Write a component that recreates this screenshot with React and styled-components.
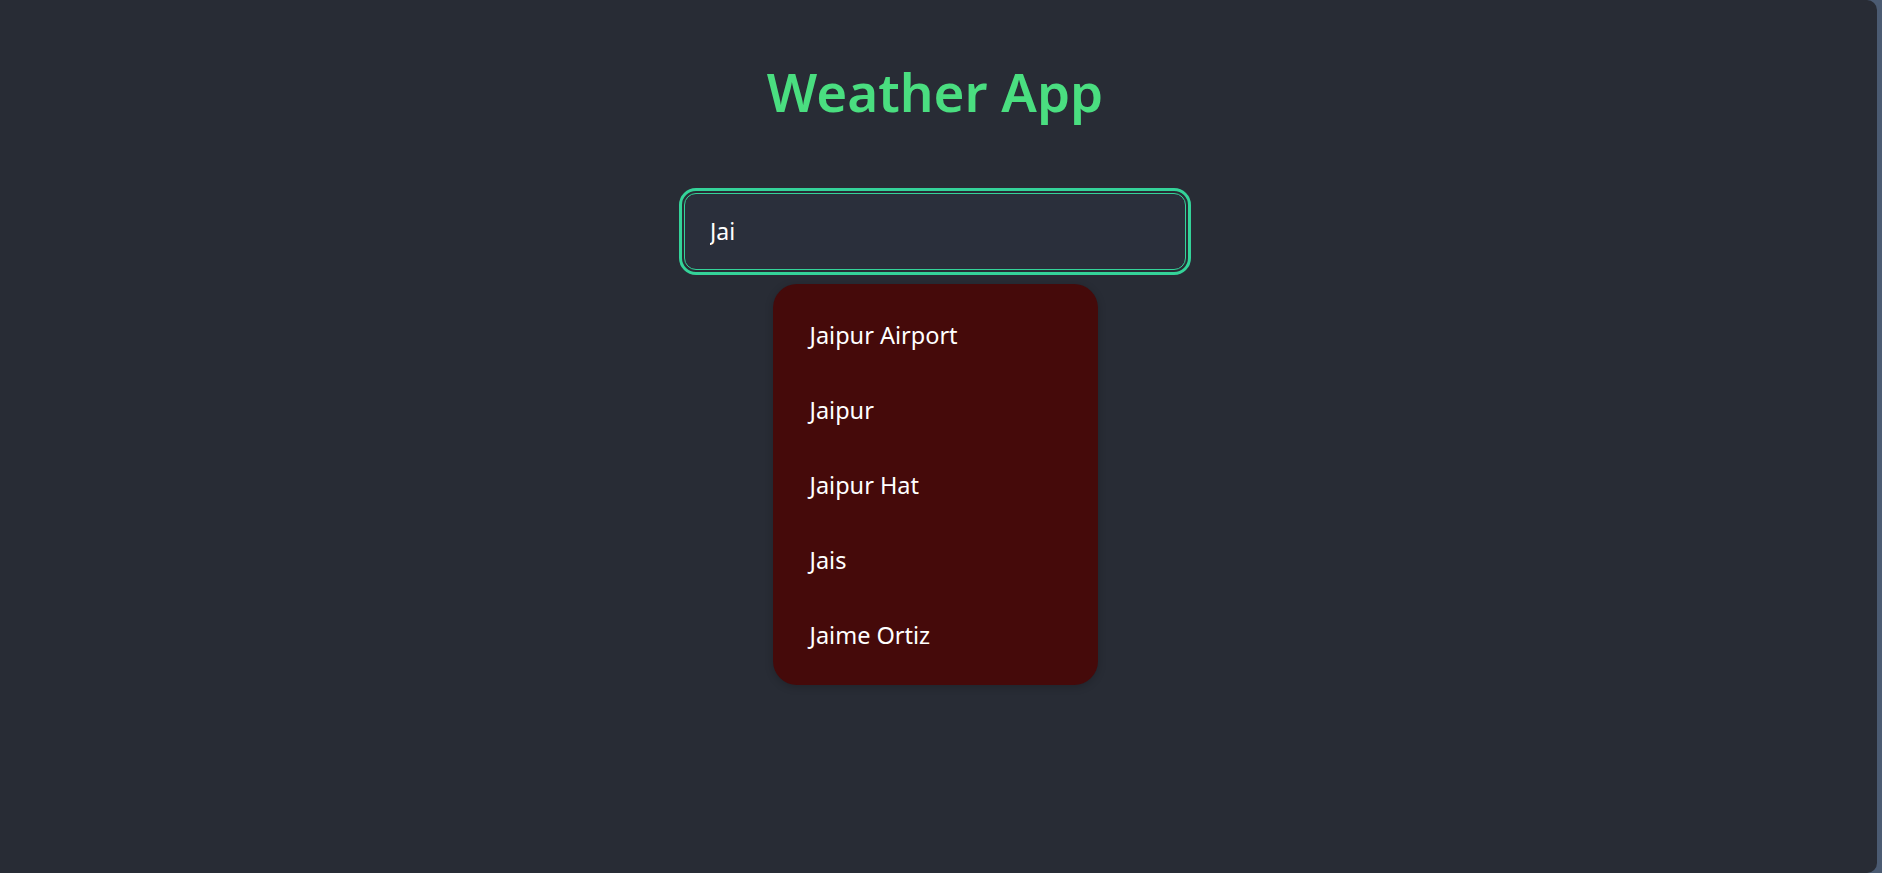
import React, { useState } from "react";
import styled, { createGlobalStyle } from "styled-components";

const GlobalStyle = createGlobalStyle`
  html, body {
    margin: 0;
    padding: 0;
    height: 100%;
    background: #4b5b72;
  }
  #root {
    height: 100%;
  }
`;

const Page = styled.div`
  box-sizing: border-box;
  width: calc(100% - 5px);
  height: 100%;
  padding-right: 7px;
  background: #282c35;
  border-radius: 0 10px 10px 0;
  display: flex;
  flex-direction: column;
  align-items: center;
  font-family: "Noto Sans", "Open Sans", sans-serif;
`;

const Title = styled.h1`
  margin: 60px 0 0;
  font-size: 53px;
  font-weight: 600;
  line-height: 1.2;
  color: #4ade80;
`;

const SearchBox = styled.div`
  margin-top: 69px;
  display: flex;
  flex-direction: column;
  align-items: center;
`;

const SearchInput = styled.input`
  box-sizing: border-box;
  width: 502px;
  height: 77px;
  padding: 0 25px;
  background: #2a2f3b;
  color: #ffffff;
  border: 1px solid #34d399;
  border-radius: 12px;
  outline: 3px solid #34d399;
  outline-offset: 2px;
  font-family: inherit;
  font-size: 23px;
`;

const Suggestions = styled.ul`
  box-sizing: border-box;
  list-style: none;
  margin: 14px 0 0;
  padding: 14px 0 12px;
  width: 325px;
  background: #450a0a;
  border-radius: 24px;
  box-shadow: 0 2px 8px rgba(0, 0, 0, 0.2);
`;

const Suggestion = styled.li`
  height: 75px;
  display: flex;
  align-items: center;
  padding-left: 37px;
  color: #ffffff;
  font-size: 23.5px;
  cursor: pointer;
`;

const places = ["Jaipur Airport", "Jaipur", "Jaipur Hat", "Jais", "Jaime Ortiz"];

const App = () => {
  const [query, setQuery] = useState("Jai");

  return (
    <>
      <GlobalStyle />
      <Page>
        <Title>Weather App</Title>
        <SearchBox>
          <SearchInput
            value={query}
            onChange={(e) => setQuery(e.target.value)}
          />
          {query && (
            <Suggestions>
              {places.map((p) => (
                <Suggestion key={p}>{p}</Suggestion>
              ))}
            </Suggestions>
          )}
        </SearchBox>
      </Page>
    </>
  );
};

export default App;
